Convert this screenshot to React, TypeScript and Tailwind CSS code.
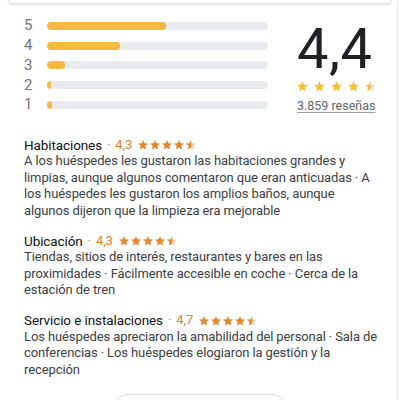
import React from "react";

const STAR = "M12 17.27L18.18 21l-1.64-7.03L22 9.24l-7.19-.61L12 2 9.19 8.63 2 9.24l5.46 4.73L5.82 21z";

function Star({ size, color, half, empty, id }: { size: number; color: string; half?: boolean; empty?: string; id: string }) {
  return (
    <svg width={size} height={size} viewBox="0 0 24 24" className="block shrink-0">
      {half ? (
        <>
          <defs>
            <clipPath id={id + "l"}>
              <rect x="0" y="0" width="12" height="24" />
            </clipPath>
            <clipPath id={id + "r"}>
              <rect x="12" y="0" width="12" height="24" />
            </clipPath>
          </defs>
          <path d={STAR} fill={empty} clipPath={`url(#${id}r)`} />
          <path d={STAR} fill={color} clipPath={`url(#${id}l)`} />
        </>
      ) : (
        <path d={STAR} fill={color} />
      )}
    </svg>
  );
}

function Stars({ size, color, empty, gap, id }: { size: number; color: string; empty: string; gap: string; id: string }) {
  return (
    <div className={"flex items-center " + gap}>
      {[0, 1, 2, 3].map((i) => (
        <Star key={i} size={size} color={color} id={id + i} />
      ))}
      <Star size={size} color={color} half empty={empty} id={id + "h"} />
    </div>
  );
}

const bars = [
  { n: "5", w: 54 },
  { n: "4", w: 33 },
  { n: "3", w: 8 },
  { n: "2", w: 2 },
  { n: "1", w: 2.4 },
];

const sections = [
  {
    title: "Habitaciones",
    rating: "4,3",
    text: "A los huéspedes les gustaron las habitaciones grandes y limpias, aunque algunos comentaron que eran anticuadas · A los huéspedes les gustaron los amplios baños, aunque algunos dijeron que la limpieza era mejorable",
  },
  {
    title: "Ubicación",
    rating: "4,3",
    text: "Tiendas, sitios de interés, restaurantes y bares en las proximidades · Fácilmente accesible en coche · Cerca de la estación de tren",
  },
  {
    title: "Servicio e instalaciones",
    rating: "4,7",
    text: "Los huéspedes apreciaron la amabilidad del personal · Sala de conferencias · Los huéspedes elogiaron la gestión y la recepción",
  },
];

export default function App() {
  return (
    <div
      className="relative w-[400px] h-[400px] overflow-hidden bg-white"
      style={{ fontFamily: "Roboto, 'Noto Sans', Arial, sans-serif" }}
    >
      <div className="absolute right-[2px] top-0 h-full w-px bg-[#e8e8e8]" />
      <div className="mx-[8px] h-[4px] rounded-b-[10px] border-x border-b border-[#e3e3e3] shadow-[0_1px_3px_rgba(0,0,0,0.12)]" />

      <div className="pl-[24px] pr-[22px]">
        <div className="flex">
          <div className="mt-[12px] w-[244px] flex flex-col">
            {bars.map((b) => (
              <div key={b.n} className="flex h-[19.75px] items-center">
                <div className="w-[23px] text-[15px] leading-none text-[#70757a]">{b.n}</div>
                <div className="h-[8px] flex-1 rounded-full bg-[#e8eaed] overflow-hidden">
                  <div className="h-full rounded-full bg-[#f4b93d]" style={{ width: b.w + "%" }} />
                </div>
              </div>
            ))}
          </div>
          <div className="ml-[29px] flex flex-col">
            <div className="mt-[17px] text-[56px] leading-none text-[#202124] tracking-[0.5px]">4,4</div>
            <div className="mt-[3px] ml-[-1px]">
              <Stars size={13} color="#f5bf33" empty="#dadce0" gap="gap-[4px]" id="top" />
            </div>
            <div className="mt-[5px] text-[12.5px] leading-[16px] text-[#5f6368] underline underline-offset-2 decoration-[#9aa0a6]">
              3.859 reseñas
            </div>
          </div>
        </div>

        <div className="mt-[22px] flex flex-col gap-[13.5px]">
          {sections.map((s, idx) => (
            <div key={s.title} className="text-[13px] leading-[16.5px] tracking-[-0.1px]">
              <div className="flex items-center">
                <span className="text-[13.5px] text-[#111]">{s.title}</span>
                <span className="mx-[5px] text-[#9aa0a6]">·</span>
                <span className="text-[#e3822c]">{s.rating}</span>
                <div className="ml-[5px]">
                  <Stars size={12} color="#e6852c" empty="#e8d2bd" gap="gap-0" id={"s" + idx} />
                </div>
              </div>
              <div className="text-[#3c4043]">{s.text}</div>
            </div>
          ))}
        </div>
      </div>

      <div className="mx-auto mt-[16px] h-[36px] w-[178px] rounded-full border border-[#dadce0]" />
    </div>
  );
}
